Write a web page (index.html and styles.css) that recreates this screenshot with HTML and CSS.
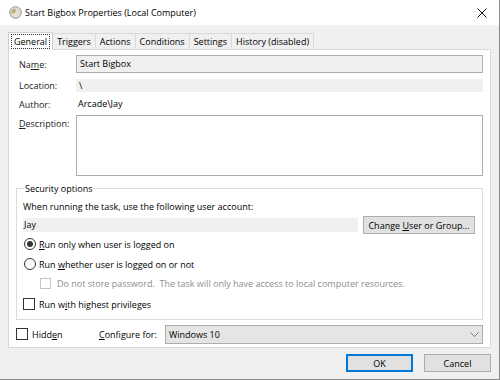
FILE: index.html
```html
<!DOCTYPE html>
<html lang="en">
<head>
  <meta charset="UTF-8">
  <title>Start Bigbox Properties (Local Computer)</title>
  <link rel="stylesheet" href="styles.css">
</head>
<body>
<div class="window">
  <div class="titlebar">
    <svg class="appIcon" width="13" height="13" viewBox="0 0 13 13">
      <circle cx="6.5" cy="6.5" r="6" fill="#c9ccd1" stroke="#9aa0a8" stroke-width="0.8"/>
      <circle cx="6.5" cy="6.5" r="4.6" fill="#e6e1cf"/>
      <path d="M6.5 6.5 L6.5 2.4 A4.1 4.1 0 0 0 2.6 7.8 Z" fill="#b7a76a"/>
    </svg>
    <span class="title">Start Bigbox Properties (Local Computer)</span>
    <span class="close">
      <svg width="10" height="10" viewBox="0 0 10 10"><path d="M0.5 0.5 L9.5 9.5 M9.5 0.5 L0.5 9.5" stroke="#111" stroke-width="1"/></svg>
    </span>
  </div>

  <div class="tabs">
    <div class="tab active"><span class="focus">General</span></div>
    <div class="tab">Triggers</div>
    <div class="tab">Actions</div>
    <div class="tab">Conditions</div>
    <div class="tab">Settings</div>
    <div class="tab">History (disabled)</div>
  </div>

  <div class="panel">
    <div class="fields">
      <div class="lbl">Na<u>m</u>e:</div>
      <div class="input">Start Bigbox</div>

      <div class="lbl r2">Location:</div>
      <div class="bar r2">\</div>

      <div class="lbl r3">Author:</div>
      <div class="plain r3">Arcade\Jay</div>

      <div class="lbl top r4"><u>D</u>escription:</div>
      <div class="textarea r4"></div>
    </div>

    <fieldset class="group">
      <legend>Security options</legend>
      <div class="hint">When running the task, use the following user account:</div>
      <div class="accountRow">
        <div class="account">Jay</div>
        <button class="btn change">Change <u>U</u>ser or Group...</button>
      </div>
      <label class="opt"><span class="radio on"></span><span><u>R</u>un only when user is logged on</span></label>
      <label class="opt"><span class="radio"></span><span>Run <u>w</u>hether user is logged on or not</span></label>
      <label class="opt sub disabled"><span class="check"></span><span>Do not store password.&nbsp; The task will only have access to local computer resources.</span></label>
      <label class="opt priv"><span class="check"></span><span>Run w<u>i</u>th highest privileges</span></label>
    </fieldset>

    <div class="bottomRow">
      <label class="opt hidden"><span class="check"></span><span>Hidd<u>e</u>n</span></label>
      <span class="cfgLbl"><u>C</u>onfigure for:</span>
      <div class="select">
        <span>Windows 10</span>
        <svg width="9" height="5" viewBox="0 0 9 5"><path d="M0.5 0.5 L4.5 4.5 L8.5 0.5" fill="none" stroke="#777" stroke-width="1"/></svg>
      </div>
    </div>
  </div>

  <div class="footer">
    <button class="btn ok">OK</button>
    <button class="btn">Cancel</button>
  </div>
</div>
</body>
</html>
```

FILE: styles.css
```css
html,body{margin:0;padding:0;}
body{font-family:"Open Sans","Noto Sans",sans-serif;font-size:9px;color:#000;background:#fff;white-space:nowrap;}
u{text-decoration:underline;text-underline-offset:1px;}

.window{width:499px;height:379px;background:#f0f0f0;border-right:1px solid #8a8a8a;border-bottom:1px solid #8a8a8a;
        display:flex;flex-direction:column;}

.titlebar{height:25px;background:#fff;display:flex;align-items:center;padding-left:9px;}
.appIcon{flex:none;margin-right:3px;}
.title{flex:1;}
.close{width:30px;display:flex;justify-content:center;margin-right:2px;}

.tabs{display:flex;padding:8px 0 0 9px;height:16px;align-items:flex-end;}
.tab{height:15px;line-height:15px;padding:0 4px;border:1px solid #d9d9d9;border-bottom:none;background:#f0f0f0;margin-left:-1px;}
.tab.active{height:17px;line-height:17px;background:#fff;border-color:#d0d0d0;position:relative;z-index:1;margin-bottom:-1px;padding:0 2px;}
.focus{border:1px dotted #333;padding:0 2px;line-height:13px;display:inline-block;}

.panel{margin:0 8px;background:#fff;border:1px solid #d9d9d9;height:299px;box-sizing:border-box;padding:5px 7px 0 7px;}

.fields{display:grid;grid-template-columns:57px 1fr;align-items:center;padding-left:3px;}
.lbl{color:#222;}
.r2{margin-top:6px;}
.r3{margin-top:5px;}
.r4{margin-top:4px;}
.lbl.top{align-self:start;margin-top:6px;}
.input{height:16px;line-height:16px;border:1px solid #adadad;background:#f0f0f0;padding-left:3px;}
.bar{height:13px;line-height:13px;background:#f0f0f0;padding-left:3px;}
.plain{height:14px;line-height:14px;padding-left:2px;}
.textarea{height:59px;border:1px solid #adadad;background:#fff;}

.group{margin:6px 0 0 0;border:1px solid #dcdcdc;padding:2px 6px 3px 6px;}
.group legend{padding:0 1px;margin-left:1px;}
.hint{margin-top:3px;}
.accountRow{display:flex;align-items:center;gap:5px;margin-top:3px;padding-right:1px;}
.account{flex:1;height:14px;line-height:14px;background:#f0f0f0;padding-left:1px;}
.btn{font:inherit;color:#000;background:#e1e1e1;border:1px solid #adadad;padding:0;height:18px;}
.change{width:112px;height:18px;}

.opt{display:flex;align-items:center;gap:3px;height:20px;}
.radio{width:10px;height:10px;border:1px solid #333;border-radius:50%;background:#fff;display:flex;align-items:center;justify-content:center;margin-left:1px;}
.radio.on::after{content:"";width:6px;height:6px;border-radius:50%;background:#333;}
.check{width:10px;height:10px;border:1px solid #333;background:#fff;display:inline-block;margin-right:1px;}
.opt.sub{padding-left:17px;height:18px;gap:5px;}
.disabled{color:#8d8d8d;}
.disabled .check{border-color:#c4c4c4;width:9px;height:9px;}
.opt.priv{height:24px;}

.bottomRow{display:flex;align-items:center;height:20px;margin-top:4px;}
.opt.hidden{width:83px;}
.cfgLbl{width:66px;}
.select{flex:1;height:17px;background:#e5e5e5;border:1px solid #adadad;display:flex;align-items:center;justify-content:space-between;padding:0 3px 0 3px;}

.footer{display:flex;justify-content:flex-end;gap:11px;padding:6px 8px 0 0;}
.footer .btn{width:67px;height:18px;}
.ok{border:1px solid #0078d7;box-shadow:inset 0 0 0 1px #0078d7;}
```
